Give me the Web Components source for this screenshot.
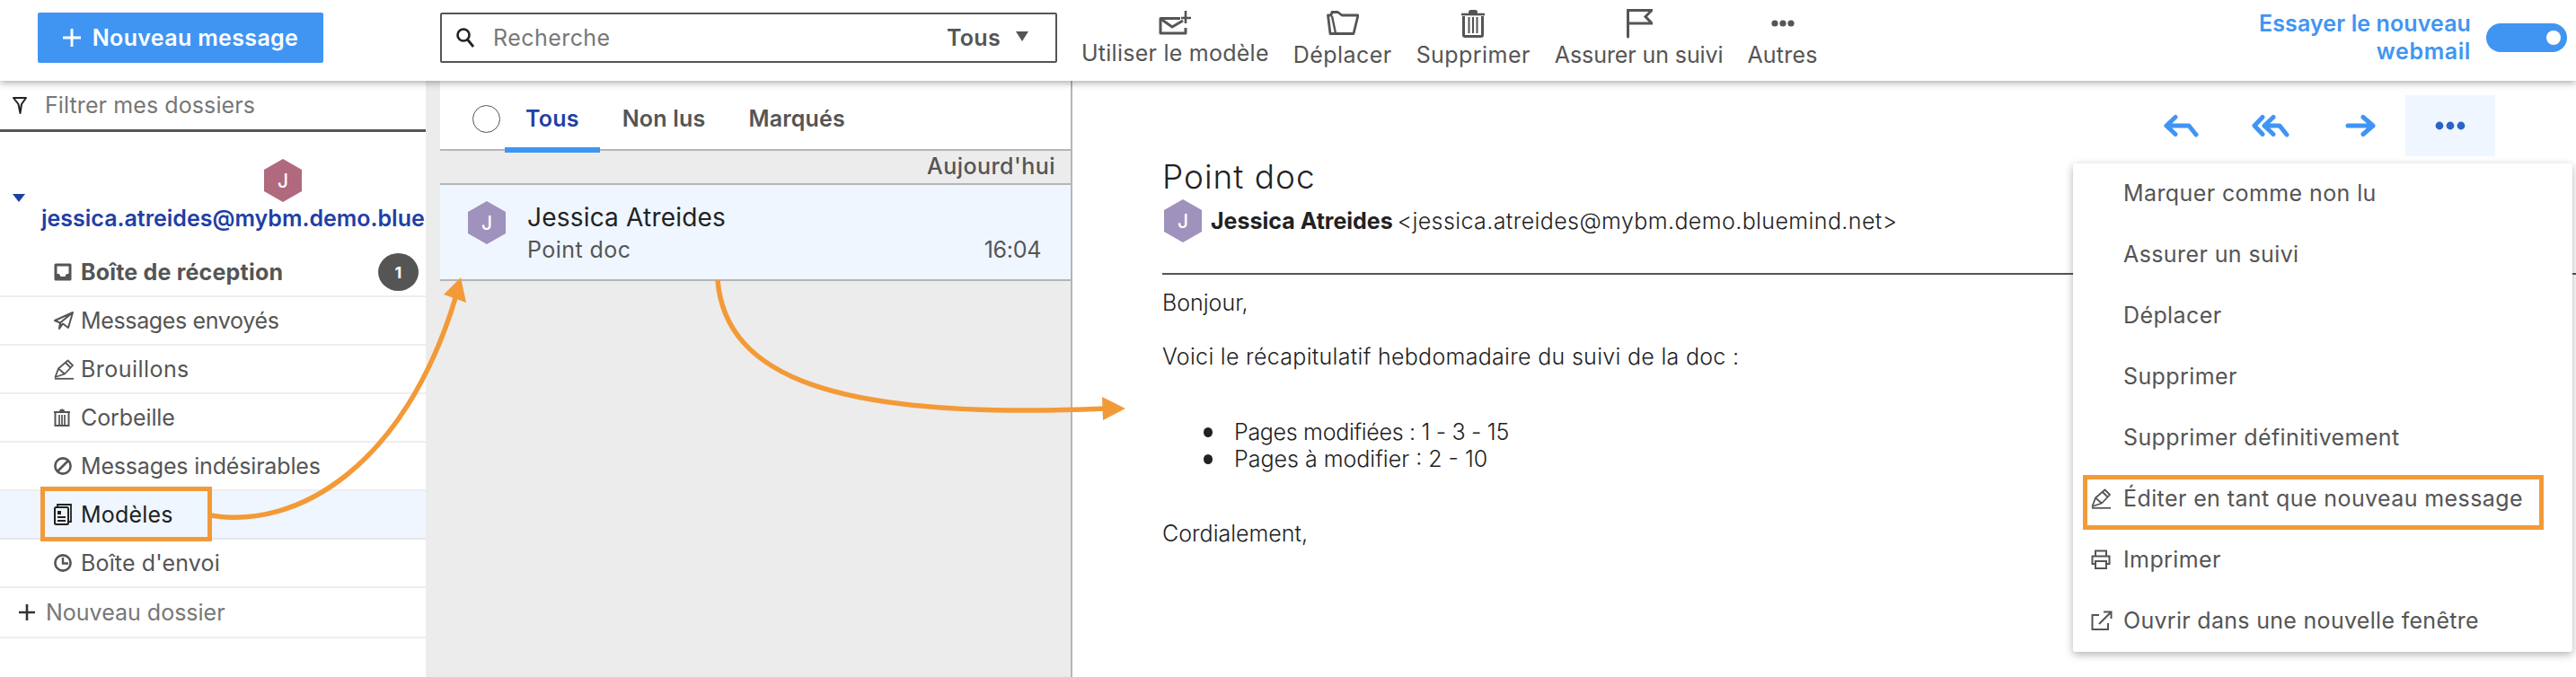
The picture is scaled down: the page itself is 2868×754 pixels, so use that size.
<!DOCTYPE html>
<html lang="fr">
<head>
<meta charset="utf-8">
<title>Webmail</title>
<style>
	html, body { margin: 0; padding: 0; }
	body {
		width: 2868px;
		height: 754px;
		overflow: hidden;
		position: relative;
		background: #fff;
		font-family: Inter, "Liberation Sans", sans-serif;
		font-size: 25px;
		color: #4d4d4d;
		--blue: #4095f2;
		--navy: #1f3fa6;
		--pale: #eff6ff;
		--line: #b5b5b5;
	}
</style>
</head>
<body>
	<top-bar>
		<new-button>Nouveau message</new-button>
		<search-box></search-box>
		<tool-button icon="useTemplate" lift style="--ls:.25px">Utiliser le modèle</tool-button>
		<tool-button icon="folder">Déplacer</tool-button>
		<tool-button icon="bin">Supprimer</tool-button>
		<tool-button icon="flag" style="--ls:-.1px">Assurer un suivi</tool-button>
		<tool-button icon="dots" style="--ls:.2px">Autres</tool-button>
		<try-toggle></try-toggle>
	</top-bar>

	<main-area>
		<folder-side>
			<folder-item icon="inbox" badge="1" strong>Boîte de réception</folder-item>
			<folder-item icon="sent" style="--ls:-.35px">Messages envoyés</folder-item>
			<folder-item icon="pencil">Brouillons</folder-item>
			<folder-item icon="trash" style="--ls:-.1px">Corbeille</folder-item>
			<folder-item icon="ban" style="--ls:-.17px">Messages indésirables</folder-item>
			<folder-item icon="template" active style="--ls:.2px">Modèles</folder-item>
			<folder-item icon="clock" style="--ls:.15px">Boîte d'envoi</folder-item>
			<folder-item icon="plus" extra style="--ls:0">Nouveau dossier</folder-item>
		</folder-side>

		<mail-list>
			<mail-row name="Jessica Atreides" subject="Point doc" time="16:04"></mail-row>
		</mail-list>

		<mail-view>
			<action-menu slot="menu">
				<menu-item>Marquer comme non lu</menu-item>
				<menu-item>Assurer un suivi</menu-item>
				<menu-item>Déplacer</menu-item>
				<menu-item>Supprimer</menu-item>
				<menu-item>Supprimer définitivement</menu-item>
				<menu-item icon="pencil">Éditer en tant que nouveau message</menu-item>
				<menu-item icon="printer">Imprimer</menu-item>
				<menu-item icon="external" style="--ls:.3px">Ouvrir dans une nouvelle fenêtre</menu-item>
			</action-menu>
		</mail-view>
	</main-area>

	<note-layer></note-layer>

<script>
const ICONS = {
	search: [22, 24, '<circle cx="9" cy="9" r="6.5" fill="none" stroke="#222" stroke-width="2.6"/><path d="M13.5 14 L20 22" stroke="#222" stroke-width="2.8" fill="none"/>'],
	useTemplate: [36, 27, '<path d="M24 8.5 H2 V25 H30 V19" fill="none" stroke="#555" stroke-width="3" stroke-linejoin="round"/><path d="M3 9.5 L15 18 L27 11" fill="none" stroke="#555" stroke-width="3"/><path d="M30 0 V14 M25 8 H36" stroke="#555" stroke-width="2.6"/>'],
	folder: [36, 28, '<path d="M1.5 5 L4 25.5 H30 L35 5 H17 L12.5 1.5 H6 L5 5 Z" fill="none" stroke="#555" stroke-width="2.8" stroke-linejoin="round"/><path d="M6 6 L10 25" fill="none" stroke="#555" stroke-width="2.4"/>'],
	bin: [28, 32, '<path d="M1 6 H27" stroke="#555" stroke-width="2.6"/><rect x="9" y="1" width="10" height="6" rx="2.5" fill="#555"/><path d="M3.5 8 V29 Q3.5 30.5 5 30.5 H23 Q24.5 30.5 24.5 29 V8" fill="none" stroke="#555" stroke-width="3"/><path d="M9.5 9 V27 M14 9 V27 M18.5 9 V27" stroke="#555" stroke-width="2"/>'],
	flag: [30, 34, '<path d="M2.5 32 V2.5 H29 L22 9.5 L29 17 H2.5" fill="none" stroke="#555" stroke-width="3" stroke-linecap="round"/>'],
	dots: [26, 8, '<circle cx="4" cy="4" r="3.6" fill="#555"/><circle cx="13" cy="4" r="3.6" fill="#555"/><circle cx="22" cy="4" r="3.6" fill="#555"/>'],
	inbox: [20, 20, '<path d="M2 2 H18 V18 H2 Z" fill="none" stroke="#555" stroke-width="3" stroke-linejoin="round"/><path d="M2 12 H6 L7.5 15 H12.5 L14 12 H18 V19 H2 Z" fill="#555"/>'],
	sent: [22, 20, '<path d="M21 1 L1 10 L7 12.5 L21 1 L16 18 L10 13.5 L6 19 L7 12.5" fill="none" stroke="#555" stroke-width="2" stroke-linejoin="round"/><path d="M7 13 L10 14 L6 19 Z" fill="#555"/>'],
	pencil: [22, 23, '<path d="M1.5 20 L5 10.5 L15.5 1.5 L21 7 L12 16.5 Z M5 10.5 L12 16.5 M13 4 L18.5 9.5" fill="none" stroke="#555" stroke-width="1.8" stroke-linejoin="round"/><path d="M1 21.8 H22" stroke="#555" stroke-width="1.8"/>'],
	trash: [18, 20, '<path d="M0 4 H18" stroke="#555" stroke-width="2"/><path d="M6 3 Q6 0.5 9 0.5 Q12 0.5 12 3" fill="#555"/><path d="M1.5 5 V19 H16.5 V5" fill="none" stroke="#555" stroke-width="2"/><path d="M6 7 V18 M9 7 V18 M12 7 V18" stroke="#555" stroke-width="1.7"/>'],
	ban: [20, 20, '<circle cx="10" cy="10" r="8.6" fill="none" stroke="#555" stroke-width="2.6"/><path d="M4 16 L16 4" stroke="#555" stroke-width="2.6"/>'],
	template: [20, 24, '<path d="M4 3 V1 H19 V20 H17" fill="none" stroke="#222" stroke-width="1.8"/><rect x="1" y="4" width="15" height="19" rx="1.5" fill="none" stroke="#222" stroke-width="2"/><path d="M4 8 H8 V12 H4 Z" fill="#222"/><path d="M4 15 H13 M4 19 H13" stroke="#222" stroke-width="1.8"/>'],
	clock: [20, 20, '<circle cx="10" cy="10" r="8.6" fill="none" stroke="#555" stroke-width="2.6"/><path d="M10 4 V10.5 H16" fill="none" stroke="#555" stroke-width="2.4"/>'],
	plus: [18, 18, '<path d="M9 0 V18 M0 9 H18" stroke="#333" stroke-width="2.6"/>'],
	funnel: [16, 20, '<path d="M1 2 H15 L10 9 L8.5 19 L6.5 9 Z" fill="none" stroke="#222" stroke-width="2" stroke-linejoin="round"/>'],
	printer: [22, 22, '<path d="M5 7 V1.5 H17 V7" fill="none" stroke="#555" stroke-width="2"/><path d="M5 16 H1.5 V7.5 H20.5 V16 H17" fill="none" stroke="#555" stroke-width="2"/><rect x="5" y="13" width="12" height="8" fill="none" stroke="#555" stroke-width="2"/>'],
	external: [24, 22, '<path d="M9 5 H1.5 V21 H19 V14" fill="none" stroke="#555" stroke-width="2"/><path d="M9 15 L22 2 M14 1.5 H22.5 V9" fill="none" stroke="#555" stroke-width="2"/>'],
	reply: [39, 26, '<path d="M13 3.5 L3 13 L13 22.5 M3 13 H28 L36 23" fill="none" stroke="#4095f2" stroke-width="5" stroke-linecap="round" stroke-linejoin="round"/>'],
	replyAll: [42, 26, '<path d="M12 3.5 L3 13 L12 22.5" fill="none" stroke="#4095f2" stroke-width="5" stroke-linecap="round" stroke-linejoin="round"/><path d="M24 3.5 L14 13 L24 22.5 M14 13 H31 L39 23" fill="none" stroke="#4095f2" stroke-width="5" stroke-linecap="round" stroke-linejoin="round"/>'],
	forward: [34, 26, '<path d="M3 13 H31 M20 3.5 L31 13 L20 22.5" fill="none" stroke="#4095f2" stroke-width="5" stroke-linecap="round" stroke-linejoin="round"/>'],
	more: [34, 10, '<circle cx="5" cy="5" r="4.4" fill="#2b63c8"/><circle cx="17" cy="5" r="4.4" fill="#2b63c8"/><circle cx="29" cy="5" r="4.4" fill="#2b63c8"/>']
};

const iconSvg = (name) => {
	const [w, h, body] = ICONS[name];
	return `<svg width="${w}" height="${h}" viewBox="0 0 ${w} ${h}" style="display:block">${body}</svg>`;
};

// small helper so each element only declares its markup
const define = (tag, html, setup) => {
	class Element_ extends HTMLElement {
		constructor() {
			super();
			this.attachShadow({ mode: 'open' });
			const markup = typeof html === 'function' ? html(this) : html;
			this.shadowRoot.innerHTML = markup;
			if (setup) setup(this);
		}
	}
	customElements.define(tag, Element_);
};

define('hex-avatar', (el) => `
<style>
	:host { display: block; width: 42px; height: 48px; flex: none; }
	div {
		width: 100%; height: 100%;
		background: ${el.getAttribute('color') || '#9f92bd'};
		clip-path: polygon(50% 0, 100% 25%, 100% 75%, 50% 100%, 0 75%, 0 25%);
		display: flex; align-items: center; justify-content: center;
		color: #fff; font-size: 21px; font-weight: 500;
	}
</style>
<div>J</div>`);

define('top-bar', `
<style>
	:host {
		display: flex; align-items: center;
		height: 90px; box-sizing: border-box;
		padding: 0 0 6px 42px;
		background: #fff;
		box-shadow: 0 2px 8px rgba(0,0,0,.35);
		position: relative; z-index: 5;
	}
</style>
<slot></slot>`);

define('new-button', `
<style>
	:host {
		display: flex; align-items: center; justify-content: center; gap: 13px;
		width: 318px; height: 56px; margin-right: 130px;
		background: var(--blue); color: #fff; border-radius: 2px;
		font-weight: 600; font-size: 25px; letter-spacing: .35px;
	}
	svg { width: 20px !important; height: 20px !important; }
	path { stroke: #fff; }
</style>
${iconSvg('plus')}
<slot></slot>`);

define('search-box', `
<style>
	:host {
		display: flex; align-items: center;
		width: 687px; height: 56px; box-sizing: border-box;
		border: 2px solid #555; border-radius: 2px;
		padding: 0 30px 0 15px; margin-right: 27px;
	}
	.label { margin-left: 20px; flex: 1; color: #777; letter-spacing: .45px; }
	.scope { font-weight: 600; color: #555; letter-spacing: .3px; }
	.caret { width: 0; height: 0; margin-left: 17px; margin-bottom: 4px;
		border: 7px solid transparent; border-top: 11px solid #555; border-bottom: 0; }
</style>
${iconSvg('search')}
<span class="label">Recherche</span>
<span class="scope">Tous</span>
<span class="caret"></span>`);

define('tool-button', (el) => `
<style>
	:host {
		display: flex; flex-direction: column; align-items: center; justify-content: flex-end;
		height: 76px; margin-right: 27px; align-self: flex-start;
		white-space: nowrap; letter-spacing: var(--ls, .45px); color: #555;
	}
	:host([lift]) { height: 74px; }
	.icon { flex: 1; display: flex; align-items: center; padding-top: 6px; }
	span { line-height: 30px; }
</style>
<div class="icon">${iconSvg(el.getAttribute('icon'))}</div>
<span><slot></slot></span>`);

define('try-toggle', `
<style>
	:host { display: flex; align-items: center; margin-left: auto; padding-right: 10px; gap: 17px; }
	.text { text-align: right; color: var(--blue); font-weight: 600; line-height: 31px; font-size: 25px; letter-spacing: .1px; }
	.text span { letter-spacing: .6px; }
	.track { width: 90px; height: 32px; border-radius: 16px; background: var(--blue); display: flex; align-items: center; justify-content: flex-end; padding-right: 7px; box-sizing: border-box; }
	.knob { width: 16px; height: 16px; border-radius: 50%; background: #fff; }
</style>
<div class="text">Essayer le nouveau<br><span>webmail</span></div>
<div class="track"><div class="knob"></div></div>`);

define('main-area', `
<style>
	:host { display: flex; height: 664px; background: #ececec; }
</style>
<slot></slot>`);

define('folder-side', `
<style>
	:host { display: block; width: 474px; margin-right: 16px; background: #fff; flex: none; overflow: hidden; }
	.filter {
		display: flex; align-items: center; gap: 20px;
		height: 54px; padding-left: 14px;
		border-bottom: 3px solid #555; color: #777; letter-spacing: .1px;
	}
	.account { height: 130px; position: relative; box-sizing: border-box; padding: 30px 0 0 46px; }
	hex-avatar { margin-left: 248px; }
	.caret { position: absolute; left: 14px; top: 69px; width: 0; height: 0;
		border: 7px solid transparent; border-top: 9px solid var(--navy); border-bottom: 0; }
	.mail { color: var(--navy); font-weight: 600; white-space: nowrap; line-height: 36px; }
</style>
<div class="filter">${iconSvg('funnel')}<span>Filtrer mes dossiers</span></div>
<div class="account">
	<span class="caret"></span>
	<hex-avatar color="#b0697d"></hex-avatar>
	<div class="mail">jessica.atreides@mybm.demo.blue</div>
</div>
<slot></slot>`);

define('folder-item', (el) => `
<style>
	:host {
		display: flex; align-items: center;
		height: 54px; box-sizing: border-box;
		padding-left: 60px; border-bottom: 2px solid #eee;
		white-space: nowrap; letter-spacing: var(--ls, .45px); color: #555;
	}
	:host([strong]) { font-weight: 700; letter-spacing: .2px; }
	:host([active]) { background: var(--pale); color: #222; border-bottom-color: #e3e6ec; }
	:host([extra]) { padding-left: 21px; height: 56px; color: #777; }
	.icon { width: 30px; flex: none; display: flex; }
	.text { flex: 1; }
	.badge {
		width: 45px; height: 42px; border-radius: 50%; margin-right: 8px;
		background: #555; color: #fff; font-size: 18px; font-weight: 700; letter-spacing: 0;
		display: flex; align-items: center; justify-content: center;
	}
</style>
<div class="icon">${iconSvg(el.getAttribute('icon'))}</div>
<div class="text"><slot></slot></div>
${el.getAttribute('badge') ? `<div class="badge">${el.getAttribute('badge')}</div>` : ''}`);

define('mail-list', `
<style>
	:host { display: block; width: 702px; flex: none; border-right: 2px solid var(--line); }
	.tabs {
		display: flex; height: 76px; box-sizing: content-box; background: #fff;
		border-bottom: 2px solid var(--line);
		padding-left: 36px; align-items: center; font-weight: 600;
		letter-spacing: .2px; color: #555; position: relative;
	}
	.tabs > * { position: relative; top: 4px; }
	.check { width: 29px; height: 29px; border: 1.5px solid #555; border-radius: 50%; margin-right: 28px; }
	.tabs span { margin-right: 48px; }
	.tabs .on { color: var(--navy); }
	.tabs .on::after {
		content: ""; position: absolute; left: -23px; right: -23px; bottom: -23px;
		height: 6px; background: var(--blue);
	}
	.day {
		height: 36px; line-height: 34px; text-align: right; padding-right: 17px;
		border-bottom: 2px solid var(--line); font-weight: 500; color: #555; letter-spacing: .45px;
	}
</style>
<div class="tabs">
	<div class="check"></div>
	<span class="on">Tous</span>
	<span>Non lus</span>
	<span>Marqués</span>
</div>
<div class="day">Aujourd'hui</div>
<slot></slot>`);

define('mail-row', (el) => `
<style>
	:host {
		display: flex; height: 107px; box-sizing: border-box;
		padding: 18px 33px 0 31px; gap: 24px;
		background: var(--pale); border-bottom: 2px solid var(--line);
	}
	.body { flex: 1; }
	.name { font-size: 28px; color: #222; line-height: 36px; letter-spacing: .2px; }
	.sub { display: flex; justify-content: space-between; color: #555; line-height: 36px; letter-spacing: .45px; }
	.time { letter-spacing: -.3px; }
</style>
<hex-avatar></hex-avatar>
<div class="body">
	<div class="name">${el.getAttribute('name')}</div>
	<div class="sub"><span>${el.getAttribute('subject')}</span><span class="time">${el.getAttribute('time')}</span></div>
</div>`);

define('mail-view', `
<style>
	:host { display: block; flex: 1; background: #fff; position: relative; padding-left: 100px; color: #222; }
	.actions { display: flex; justify-content: flex-end; padding: 16px 90px 0 0; height: 68px; }
	.actions div { width: 100px; height: 68px; display: flex; align-items: center; justify-content: center; }
	.actions .more { background: var(--pale); }
	h1 { margin: 0; font-weight: 300; font-size: 37px; line-height: 46px; letter-spacing: 1px; }
	.from { display: flex; align-items: center; gap: 10px; margin: 2px 0 0 2px; white-space: nowrap; }
	.from b { font-weight: 700; margin-right: -2px; }
	.from span { font-weight: 300; letter-spacing: .4px; }
	hr { border: 0; height: 2px; background: #555; margin: 34px 0 0; }
	p, ul { margin: 0; font-weight: 300; line-height: 30px; }
	.hello { margin-top: 16px; }
	.recap { margin-top: 30px; letter-spacing: .3px; }
	ul { margin-top: 54px; padding-left: 80px; list-style: none; }
	li::before {
		content: ""; display: inline-block; width: 10px; height: 11px; border-radius: 50%;
		background: #222; margin: 0 24px 3px -34px; vertical-align: middle;
	}
	li:first-child { letter-spacing: -.3px; }
	.bye { margin-top: 53px; }
</style>
<div class="actions">
	<div>${iconSvg('reply')}</div>
	<div>${iconSvg('replyAll')}</div>
	<div>${iconSvg('forward')}</div>
	<div class="more">${iconSvg('more')}</div>
</div>
<h1>Point doc</h1>
<div class="from"><hex-avatar></hex-avatar><div><b>Jessica Atreides</b> <span>&lt;jessica.atreides@mybm.demo.bluemind.net&gt;</span></div></div>
<hr>
<p class="hello">Bonjour,</p>
<p class="recap">Voici le récapitulatif hebdomadaire du suivi de la doc :</p>
<ul>
	<li>Pages modifiées : 1 - 3 - 15</li>
	<li>Pages à modifier : 2 - 10</li>
</ul>
<p class="bye">Cordialement,</p>
<slot name="menu"></slot>`);

define('action-menu', `
<style>
	:host {
		display: block; position: absolute; top: 92px; right: 4px; width: 556px;
		background: #fff; border-radius: 3px;
		box-shadow: 0 3px 10px rgba(0,0,0,.3);
	}
</style>
<slot></slot>`);

define('menu-item', (el) => `
<style>
	:host {
		display: flex; align-items: center; height: 68px; box-sizing: border-box;
		padding: 0 0 2px 20px; white-space: nowrap; color: #555; letter-spacing: var(--ls, .4px);
	}
	.icon { width: 36px; flex: none; display: flex; }
</style>
<div class="icon">${el.getAttribute('icon') ? iconSvg(el.getAttribute('icon')) : ''}</div>
<slot></slot>`);

// orange callouts drawn on top of the screenshot
define('note-layer', `
<style>
	:host { position: absolute; left: 0; top: 0; width: 2868px; height: 754px; z-index: 20; pointer-events: none; }
	svg { display: block; }
</style>
<svg width="2868" height="754" viewBox="0 0 2868 754" fill="none" stroke="#f39a38" stroke-width="5">
	<rect x="47.5" y="544.5" width="186" height="56"/>
	<rect x="2321.5" y="531.5" width="508" height="56"/>
	<path d="M235 574 C 330 590, 450 520, 507 332" stroke-width="5.5"/>
	<path d="M513 309 L494 328 L519 337 Z" fill="#f39a38" stroke="none"/>
	<path d="M799 312 C 808 420, 930 468, 1230 455" stroke-width="5.5"/>
	<path d="M1253 455 L1227 442 L1228 468 Z" fill="#f39a38" stroke="none"/>
</svg>`);
</script>
</body>
</html>
